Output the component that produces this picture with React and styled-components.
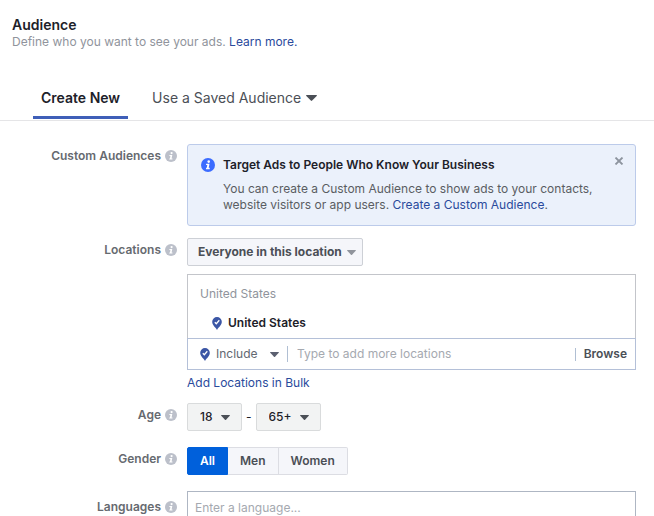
import React, { useState } from "react";
import styled, { createGlobalStyle, css } from "styled-components";

const GlobalStyle = createGlobalStyle`
  * { box-sizing: border-box; }
  body {
    margin: 0;
    background: #fff;
    color: #1d2129;
    font-family: Inter, "Liberation Sans", sans-serif;
    font-size: 12px;
    line-height: 16px;
  }
  button, input, select { font: inherit; color: inherit; margin: 0; }
`;

const Page = styled.main`
  display: flex;
  flex-direction: column;
`;

const Header = styled.header`
  padding: 16px 12px 0;
`;

const Title = styled.h1`
  margin: 0;
  font-size: 14px;
  line-height: 18px;
  font-weight: 600;
`;

const Subtitle = styled.p`
  margin: 0;
  color: #90949c;
`;

const Link = styled.a`
  color: #2a4a9c;
  text-decoration: none;
  &:hover { text-decoration: underline; }
`;

const Tabs = styled.div`
  display: flex;
  gap: 16px;
  margin-top: 27px;
  padding: 0 33px 1px;
  border-bottom: 1px solid #e5e5e7;
`;

const Tab = styled.button`
  display: flex;
  align-items: center;
  gap: 5px;
  height: 42px;
  padding: 3px 8px 0;
  border: 0;
  border-bottom: 3px solid ${(p) => (p.$active ? "#3f5fb8" : "transparent")};
  background: none;
  color: ${(p) => (p.$active ? "#1d2129" : "#4b4f56")};
  font-size: 14px;
  font-weight: ${(p) => (p.$active ? 600 : 400)};
  white-space: nowrap;
`;

const Form = styled.form`
  display: flex;
  flex-direction: column;
  padding: 23px 18px 12px 0;
`;

const Row = styled.div`
  display: grid;
  grid-template-columns: 177px minmax(0, 1fr);
  column-gap: 10px;
  align-items: start;
  margin-bottom: ${(p) => p.$gap || 12}px;
`;

const Label = styled.label`
  display: flex;
  justify-content: flex-end;
  align-items: center;
  gap: 4px;
  padding-top: ${(p) => (p.$tall ? 8 : 4)}px;
  color: #666a70;
  font-weight: 600;
`;

const Svg = styled.svg`
  display: block;
  flex: none;
`;

const Notice = styled.section`
  display: flex;
  align-items: flex-start;
  min-height: 82px;
  padding: 12px 11px 12px 13px;
  border: 1px solid #bccbea;
  border-radius: 3px;
  background: #ebf1fb;
`;

const NoticeIcon = styled.span`
  flex: none;
  padding: 1px 8px 0 0;
`;

const NoticeBody = styled.div`
  flex: 1;
`;

const NoticeTitle = styled.h2`
  margin: 0 0 8px;
  font-size: 12px;
  line-height: 16px;
  font-weight: 600;
`;

const NoticeText = styled.p`
  margin: 0;
  max-width: 380px;
  color: #5a5d62;
`;

const CloseButton = styled.button`
  flex: none;
  padding: 0;
  border: 0;
  background: none;
`;

const Stack = styled.div`
  display: flex;
  flex-direction: column;
  align-items: flex-start;
`;

const SelectShell = styled.span`
  display: inline-grid;
  align-items: center;
  & > svg {
    grid-area: 1 / 1;
    justify-self: end;
    margin-right: ${(p) => p.$inset || 0}px;
    pointer-events: none;
  }
`;

const variants = {
  cool: css`
    height: 28px;
    padding: 0 20px 0 10px;
    border: 1px solid #cdd0d6;
    background: #f5f6fa;
    color: #4b4f56;
    font-weight: 700;
  `,
  neutral: css`
    height: 28px;
    padding: 0 28px 0 12px;
    border: 1px solid #d9dbdc;
    background: #f2f3f3;
    color: #1d2129;
    font-weight: 500;
  `,
  plain: css`
    height: 20px;
    padding: 0 21px 0 6px;
    border: 0;
    background: none;
    color: #616770;
  `,
};

const SelectBox = styled.select`
  grid-area: 1 / 1;
  appearance: none;
  border-radius: 2px;
  ${(p) => variants[p.$variant]}
`;

const LocationBox = styled.div`
  align-self: stretch;
  margin: 8px 0 5px;
`;

const LocationList = styled.div`
  padding: 11px 12px 7px;
  border: 1px solid #c3c5ca;
  border-bottom: 0;
`;

const Country = styled.div`
  color: #90949c;
`;

const LocationItem = styled.div`
  display: flex;
  align-items: center;
  gap: 6px;
  padding: 13px 0 0 12px;
  font-weight: 600;
`;

const LocationEntry = styled.div`
  display: flex;
  align-items: center;
  height: 32px;
  padding: 0 8px 0 12px;
  border: 1px solid #b4c0d8;
`;

const TextInput = styled.input`
  flex: 1;
  min-width: 0;
  padding: 0 9px;
  border: 0;
  outline: 0;
  background: none;
  &::placeholder { color: #a5a9b0; opacity: 1; }
`;

const Divider = styled.span`
  width: 1px;
  height: ${(p) => (p.$short ? 13 : 16)}px;
  margin-left: ${(p) => (p.$short ? 0 : 8)}px;
  background: #b0bfd3;
`;

const BrowseButton = styled.button`
  padding: 0 0 0 8px;
  border: 0;
  background: none;
  color: #4b4f56;
  font-weight: 600;
`;

const Range = styled.div`
  display: flex;
  align-items: center;
  gap: 4px;
`;

const Segments = styled.div`
  display: flex;
`;

const Segment = styled.button`
  height: 28px;
  padding: 0 12px;
  border: 1px solid #dcdde3;
  border-left-width: 0;
  background: #f5f6fa;
  color: #4b4f56;
  font-weight: 600;
  &:first-child { border-left-width: 1px; border-radius: 2px 0 0 2px; }
  &:last-child { border-radius: 0 2px 2px 0; }
  ${(p) => p.$active && css`
    border-color: #0060db;
    background: #0060db;
    color: #fff;
  `}
`;

const LanguageField = styled.div`
  display: flex;
  height: 34px;
  border: 1px solid #aeb6c3;
`;

const LanguageInput = styled(TextInput)`
  padding: 0 7px;
`;

function InfoIcon({ size = 12, color = "#bcc0ca" }) {
  return (
    <Svg width={size} height={size} viewBox="0 0 14 14" aria-hidden="true">
      <circle cx="7" cy="7" r="7" fill={color} />
      <circle cx="7.7" cy="3.6" r="1.3" fill="#fff" />
      <path d="M5.2 5.7h3.3l-.8 4.1h1v1.4H4.900l.2-1.400h.7l.5-2.700H5z" fill="#fff" />
    </Svg>
  );
}

function Caret({ color = "#4b4f56", width = 9, height = 5 }) {
  return (
    <Svg width={width} height={height} viewBox="0 0 10 6" preserveAspectRatio="none" aria-hidden="true">
      <path d="M.5 0h9q.8.2.2.9L5.6 5.6q-.6.6-1.2 0L.3.9Q-.3.2.5 0z" fill={color} />
    </Svg>
  );
}

function Pin() {
  return (
    <Svg width="10" height="13" viewBox="0 0 10 13" aria-hidden="true">
      <path d="M5 0a4.800 4.800 0 0 1 4.800 4.800C9.800 8 6.800 10 5 13 3.200 10 .2 8 .2 4.800A4.800 4.800 0 0 1 5 0z" fill="#3b56a5" />
      <path d="M2.800 5.300l1.500 1.400 3-3.400" fill="none" stroke="#fff" strokeWidth="1.300" />
    </Svg>
  );
}

function Select({ variant, inset, caret, options, ...rest }) {
  return (
    <SelectShell $inset={inset}>
      <SelectBox $variant={variant} {...rest}>
        {options.map((o) => <option key={o}>{o}</option>)}
      </SelectBox>
      <Caret {...caret} />
    </SelectShell>
  );
}

function FieldLabel({ children, ...rest }) {
  return (
    <Label {...rest}>
      {children}
      <InfoIcon />
    </Label>
  );
}

export default function App() {
  const [tab, setTab] = useState("new");
  const [gender, setGender] = useState("All");
  const [noticeOpen, setNoticeOpen] = useState(true);

  return (
    <Page>
      <GlobalStyle />
      <Header>
        <Title>Audience</Title>
        <Subtitle>
          Define who you want to see your ads. <Link href="#learn">Learn more.</Link>
        </Subtitle>
      </Header>

      <Tabs role="tablist">
        <Tab role="tab" aria-selected={tab === "new"} $active={tab === "new"} onClick={() => setTab("new")}>
          Create New
        </Tab>
        <Tab role="tab" aria-selected={tab === "saved"} $active={tab === "saved"} onClick={() => setTab("saved")}>
          Use a Saved Audience
          <Caret width={11} height={6} />
        </Tab>
      </Tabs>

      <Form onSubmit={(e) => e.preventDefault()}>
        <Row>
          <FieldLabel as="div">Custom Audiences</FieldLabel>
          {noticeOpen && (
            <Notice>
              <NoticeIcon><InfoIcon size={14} color="#3b6cff" /></NoticeIcon>
              <NoticeBody>
                <NoticeTitle>Target Ads to People Who Know Your Business</NoticeTitle>
                <NoticeText>
                  You can create a Custom Audience to show ads to your contacts, website visitors or app
                  users. <Link href="#custom">Create a Custom Audience</Link>.
                </NoticeText>
              </NoticeBody>
              <CloseButton type="button" aria-label="Close" onClick={() => setNoticeOpen(false)}>
                <Svg width="10" height="8" viewBox="0 0 10 8" aria-hidden="true">
                  <path d="M1.500.500l7 7M8.500.500l-7 7" stroke="#8d949e" strokeWidth="1.800" />
                </Svg>
              </CloseButton>
            </Notice>
          )}
        </Row>

        <Row>
          <FieldLabel htmlFor="scope">Locations</FieldLabel>
          <Stack>
            <Select id="scope" variant="cool" inset={7} caret={{ color: "#90949c" }} options={["Everyone in this location"]} />
            <LocationBox>
              <LocationList>
                <Country>United States</Country>
                <LocationItem><Pin />United States</LocationItem>
              </LocationList>
              <LocationEntry>
                <Pin />
                <Select variant="plain" caret={{ color: "#5b6070" }} options={["Include"]} aria-label="Include or exclude" />
                <Divider />
                <TextInput placeholder="Type to add more locations" aria-label="Add locations" />
                <Divider $short />
                <BrowseButton type="button">Browse</BrowseButton>
              </LocationEntry>
            </LocationBox>
            <Link href="#bulk">Add Locations in Bulk</Link>
          </Stack>
        </Row>

        <Row $gap={16}>
          <FieldLabel htmlFor="age-min">Age</FieldLabel>
          <Range>
            <Select id="age-min" variant="neutral" inset={12} options={["18"]} />
            <span>-</span>
            <Select variant="neutral" inset={12} options={["65+"]} aria-label="Maximum age" />
          </Range>
        </Row>

        <Row $gap={16}>
          <FieldLabel as="div" id="gender-label">Gender</FieldLabel>
          <Segments role="group" aria-labelledby="gender-label">
            {["All", "Men", "Women"].map((g) => (
              <Segment key={g} type="button" aria-pressed={gender === g} $active={gender === g} onClick={() => setGender(g)}>
                {g}
              </Segment>
            ))}
          </Segments>
        </Row>

        <Row>
          <FieldLabel htmlFor="languages" $tall>Languages</FieldLabel>
          <LanguageField>
            <LanguageInput id="languages" placeholder="Enter a language..." />
          </LanguageField>
        </Row>
      </Form>
    </Page>
  );
}
